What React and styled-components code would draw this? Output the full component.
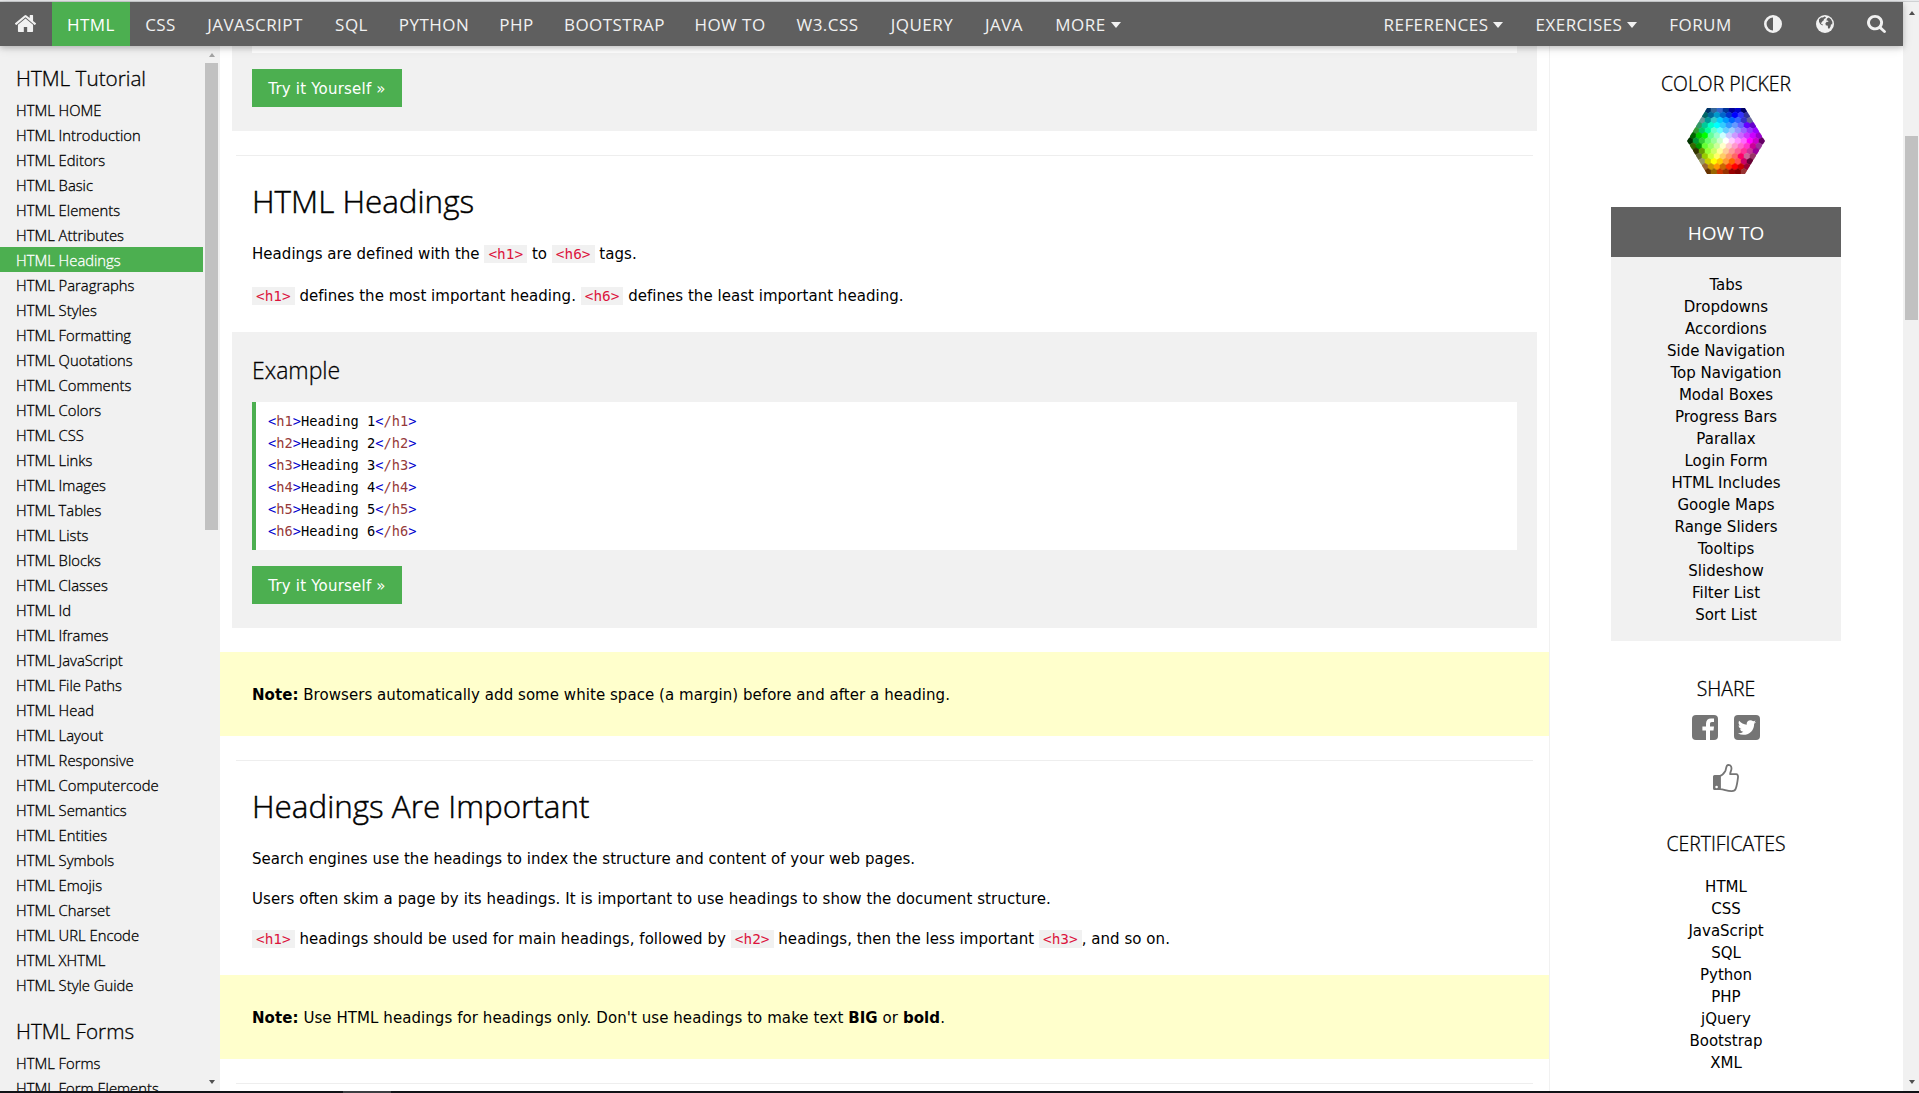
import React from "react";
import styled, { createGlobalStyle, css } from "styled-components";

const ui = `"Open Sans", "Noto Sans", sans-serif`;
const body = `"DejaVu Sans", Verdana, sans-serif`;
const mono = `"DejaVu Sans Mono", Consolas, monospace`;
const green = "#4caf50";
const light = "#f1f1f1";

// A weight between light and regular: the light cut with a hairline outline.
const semiLight = css`
  font-family: ${ui};
  font-weight: 300;
  -webkit-text-stroke: 0.3px currentColor;
`;

const Global = createGlobalStyle`
  * { box-sizing: border-box; }
  body { margin: 0; background: #fff; color: #000; overflow: hidden; font-family: ${body}; font-size: 15px; }
  h2, h3, p, ul { margin: 0; padding: 0; font-weight: 400; list-style: none; }
  a { color: inherit; text-decoration: none; }
  svg { display: block; }
`;

const Page = styled.div`
  display: flex;
  flex-direction: column;
  width: 1919px;
  height: 1093px;
  overflow: hidden;
`;
const TopEdge = styled.div`
  height: 2px;
  flex: none;
  background: #e9eaec;
  border-bottom: 1px solid #cfd1d3;
`;
const Window = styled.div`
  display: flex;
  height: 1089px;
  flex: none;
`;
const Site = styled.div`
  display: flex;
  flex-direction: column;
  width: 1903px;
`;
const BottomEdge = styled.div`
  display: flex;
  height: 2px;
  flex: none;
  padding-left: 343px;
  background: #101216;
`;
const BottomMark = styled.div`
  width: 48px;
  background: #3c3e42;
`;

const NavBar = styled.nav`
  position: relative;
  z-index: 2;
  display: flex;
  justify-content: space-between;
  height: 44px;
  flex: none;
  background: #5f5f5f;
  color: ${light};
  box-shadow: 0 2px 5px 0 rgba(0, 0, 0, 0.16), 0 2px 10px 0 rgba(0, 0, 0, 0.12);
`;
const NavGroup = styled.div`
  display: flex;
`;
const NavLink = styled.a`
  display: flex;
  align-items: center;
  justify-content: center;
  gap: 5px;
  width: ${(p) => p.$w}px;
  font-family: ${ui};
  font-size: 17px;
  letter-spacing: 0.45px;
  white-space: nowrap;
  ${(p) => p.$active && css`background: ${green}; color: #fff;`}
`;
const NavIcon = styled(NavLink)`
  padding-bottom: ${(p) => p.$lift || 0}px;
  padding-right: 1px;
`;
const Caret = styled.span`
  margin-top: 1px;
  border: 5.5px solid transparent;
  border-top: 6.5px solid ${light};
  border-bottom: 0;
`;

const Columns = styled.div`
  display: flex;
  height: 1045px;
  overflow: hidden;
`;
const Sidebar = styled.aside`
  display: flex;
  width: 220px;
  background: ${light};
`;
const Menu = styled.div`
  width: 203px;
  padding-top: 16px;
  overflow: hidden;
  white-space: nowrap;
`;
const MenuTitle = styled.h2`
  ${semiLight}
  height: 32px;
  margin: ${(p) => (p.$first ? 0 : 18)}px 0 3px;
  padding-left: 16px;
  font-size: 20.7px;
  line-height: 32px;
`;
const MenuItem = styled.a`
  ${semiLight}
  display: block;
  height: 25px;
  padding-left: 16px;
  font-size: 14.8px;
  line-height: 27px;
  ${(p) => p.$active && css`background: ${green}; color: #fff;`}
`;

const Track = styled.div`
  display: flex;
  flex-direction: column;
  align-items: center;
  width: ${(p) => p.$w}px;
  margin-left: ${(p) => p.$ml || 0}px;
  padding: ${(p) => p.$pad};
  background: ${light};
`;
const Arrow = styled.span`
  flex: none;
  border: 3.5px solid transparent;
  ${(p) =>
    p.$up
      ? css`border-top: 0; border-bottom: 4.5px solid ${p.$color};`
      : css`border-bottom: 0; border-top: 4.5px solid ${p.$color}; margin-top: auto;`}
`;
const Thumb = styled.div`
  flex: none;
  width: 13px;
  height: ${(p) => p.$h}px;
  margin-top: ${(p) => p.$mt}px;
  background: #c1c1c1;
`;

const Main = styled.main`
  display: flex;
  flex-direction: column;
  width: 1329px;
  flex: none;
`;
const Example = styled.section`
  display: flex;
  flex-direction: column;
  align-items: flex-start;
  margin: ${(p) => (p.$cut ? 0 : 24)}px 12px 0;
  padding: ${(p) => (p.$cut ? 0 : 20)}px 20px 24px;
  background: ${light};
`;
const ExampleTitle = styled.h3`
  ${semiLight}
  margin-bottom: 14px;
  font-size: 23px;
  line-height: 36px;
`;
const CodeBox = styled.div`
  align-self: stretch;
  padding: 8px 12px;
  border-left: 4px solid ${green};
  background: #fff;
  font-family: ${mono};
  font-size: 13.7px;
  line-height: 22px;
`;
const CodeTail = styled.div`
  align-self: stretch;
  height: 7px;
  background: #fff;
`;
const Mark = styled.span`
  color: mediumblue;
`;
const TagName = styled.span`
  color: #963a3a;
`;
const TryButton = styled.a`
  display: flex;
  align-items: center;
  justify-content: center;
  width: 150px;
  height: 38px;
  margin-top: 16px;
  padding-top: 2px;
  background: ${green};
  color: #fff;
  letter-spacing: 0.2px;
`;
const Rule = styled.div`
  height: 1px;
  flex: none;
  margin: 24px 16px 0;
  background: #eee;
`;
const Title = styled.h2`
  ${semiLight}
  -webkit-text-stroke-width: 0.45px;
  margin: 21px 0 1px 32px;
  font-size: 31.4px;
  line-height: 48px;
`;
const Para = styled.p`
  height: 23px;
  margin: ${(p) => p.$mt || 17}px 32px 0;
  line-height: 23px;
  letter-spacing: ${(p) => p.$ls || 0.04}px;
  white-space: nowrap;
`;
const Code = styled.code`
  display: inline-block;
  height: 18px;
  padding: 0 4px;
  background: ${light};
  color: crimson;
  font-family: ${mono};
  font-size: 14.4px;
  line-height: 18px;
  letter-spacing: 0;
`;
const Note = styled.div`
  height: 84px;
  flex: none;
  margin-top: 24px;
  padding: 32px 32px 29px;
  background: #ffffcc;
  line-height: 23px;
  letter-spacing: ${(p) => p.$ls || 0.05}px;
`;

const Right = styled.aside`
  display: flex;
  flex-direction: column;
  align-items: center;
  width: 354px;
  padding: 22px 1px 0 0;
  border-left: 1px solid ${light};
  text-align: center;
`;
const RightTitle = styled.h3`
  ${semiLight}
  height: 30px;
  margin-top: ${(p) => p.$mt || 0}px;
  font-size: 19.4px;
  line-height: 31px;
`;
const PickerBox = styled.div`
  margin: 10px 0 33px;
`;
const HowTo = styled.section`
  width: 230px;
  height: 434px;
  background: ${light};
`;
const HowToHead = styled.h3`
  height: 50px;
  margin-bottom: 17px;
  background: #616161;
  color: #fff;
  font-family: ${ui};
  font-size: 19px;
  line-height: 52px;
`;
const Links = styled.ul`
  line-height: 22px;
  margin-top: ${(p) => p.$mt || 0}px;
`;
const Share = styled.div`
  display: flex;
  gap: 16px;
  margin-top: ${(p) => p.$mt}px;
`;

const PALETTE = [
  "003366 336699 3366CC 003399 000099 0000CC 000066",
  "006666 006699 0099CC 0066CC 0033CC 0000FF 3333FF 333399",
  "669999 009999 33CCCC 00CCFF 0099FF 0066FF 3366FF 3333CC 666699",
  "339966 00CC99 00FFCC 00FFFF 33CCFF 3399FF 6699FF 6666FF 6600FF 6600CC",
  "339933 00CC66 00FF99 66FFCC 66FFFF 66CCFF 99CCFF 9999FF 9966FF 9933FF 9900FF",
  "006600 00CC00 00FF00 66FF99 99FFCC CCFFFF CCCCFF CC99FF CC66FF CC33FF CC00FF 9900CC",
  "003300 009933 33CC33 66FF66 99FF99 CCFFCC FFFFFF FFCCFF FF99FF FF66FF FF00FF CC00CC 660066",
  "336600 009900 66FF33 99FF66 CCFF99 FFFFCC FFCCCC FF99CC FF66CC FF33CC CC0099 993399",
  "333300 669900 99FF33 CCFF66 FFFF99 FFCC99 FF9999 FF6699 FF3399 CC3399 990099",
  "666633 99CC00 CCFF33 FFFF66 FFCC66 FF9966 FF6666 FF0066 CC6699 993366",
  "999966 CCCC00 FFFF00 FFCC00 FF9933 FF6600 FF5050 CC0066 660033",
  "996633 CC9900 FF9900 CC6600 FF3300 FF0000 CC0000 990033",
  "663300 996600 CC3300 993300 990000 800000 993333",
].map((row) => row.split(" "));

function ColorPicker() {
  return (
    <svg width="78" height="66" viewBox="0 0 78 66">
      <defs>
        <clipPath id="hex">
          <polygon points="20,0 58,0 78,33 58,66 20,66 0,33" />
        </clipPath>
      </defs>
      <g clipPath="url(#hex)">
        {PALETTE.map((row, r) =>
          row.map((c, i) => {
            const x = 39 + (i - (row.length - 1) / 2) * 6;
            const y = 33 + (r - 6) * 5.15;
            return (
              <polygon
                key={r + "-" + i}
                fill={"#" + c}
                stroke={"#" + c}
                strokeWidth="0.5"
                points={`${x},${y - 3.5} ${x + 3},${y - 1.75} ${x + 3},${y + 1.75} ${x},${y + 3.5} ${x - 3},${y + 1.75} ${x - 3},${y - 1.75}`}
              />
            );
          })
        )}
      </g>
    </svg>
  );
}

const HomeIcon = () => (
  <svg width="21" height="17" viewBox="97 250 1598 1290" fill={light}>
    <path d="M1472 992v480q0 26-19 45t-45 19h-384v-384h-256v384h-384q-26 0-45-19t-19-45v-480q0-1 .5-3t.5-3l575-474 575 474q1 2 1 6zm223-69l-62 74q-8 9-21 11h-3q-13 0-21-7l-692-577-692 577q-12 8-24 7-13-2-21-11l-62-74q-8-10-7-23.5t11-21.5l719-599q32-26 76-26t76 26l244 204v-195q0-14 9-23t23-9h192q14 0 23 9t9 23v408l219 182q10 8 11 21.5t-7 23.5z" />
  </svg>
);
const ContrastIcon = () => (
  <svg width="18" height="18" viewBox="0 0 18 18" fill={light}>
    <path fillRule="evenodd" d="M9 0a9 9 0 1 1 0 18A9 9 0 0 1 9 0zM9 2.6a6.4 6.4 0 0 0 0 12.8z" />
  </svg>
);
const GlobeIcon = () => (
  <svg width="18" height="18" viewBox="0 0 18 18">
    <circle cx="9" cy="9" r="9" fill={light} />
    <path
      fill="#5f5f5f"
      d="M3 4.2 5.2 2.6 7 2.4 8.6 1.6 10 2.2 9.2 3.4 7.6 4 8.2 5 6.6 6 5.8 7.6 4.6 7.8 5.8 9.2 7 9.6 6.4 10.4 4.2 9 3 6.8zM11 3.4 12.8 2.6 15 4.2 16.4 7 16.2 9.4 15 9.2 14.6 11.6 13.2 13.8 12 13.2 11.8 10.8 9.8 10.2 9.4 8.2 10.8 6.8 12.6 7 11.6 5.6 10.4 5.6z"
    />
  </svg>
);
const SearchIcon = () => (
  <svg width="19" height="18" viewBox="64 128 1664 1664" fill={light} preserveAspectRatio="none">
    <path d="M1216 832q0-185-131.5-316.5t-316.5-131.5-316.5 131.5-131.5 316.5 131.5 316.5 316.5 131.5 316.5-131.5 131.5-316.5zm512 832q0 52-38 90t-90 38q-54 0-90-38l-343-342q-179 124-399 124-143 0-273.5-55.5t-225-150-150-225-55.5-273.5 55.5-273.5 150-225 225-150 273.5-55.5 273.5 55.5 225 150 150 225 55.5 273.5q0 220-124 399l343 343q37 37 37 90z" />
  </svg>
);
const FacebookIcon = () => (
  <svg width="26" height="25" viewBox="0 0 26 25">
    <rect width="26" height="25" rx="4" fill="#757575" />
    <path fill="#fff" d="M14 25v-9.5h-3.6v-4H14V8.6C14 5.2 16 3.4 19 3.4c1.3 0 2.4.1 3 .2v3.5h-2c-1.5 0-2 .8-2 1.9v2.5h4l-.5 4H18V25z" />
  </svg>
);
const TwitterIcon = () => (
  <svg width="26" height="25" viewBox="0 0 26 25">
    <rect width="26" height="25" rx="4" fill="#757575" />
    <path
      fill="#fff"
      transform="translate(2.6 2.2) scale(0.0115)"
      d="M1684 408q-67 98-162 167 1 14 1 42 0 130-38 259.5t-115.5 248.5-184.5 210.5-258 146-323 54.5q-271 0-496-145 35 4 78 4 225 0 401-138-105-2-188-64.5t-114-159.5q33 5 61 5 43 0 85-11-112-23-185.5-111.5t-73.5-205.5v-4q68 38 146 41-66-44-105-115t-39-154q0-88 44-163 121 149 294.5 238.5t371.5 99.5q-8-38-8-74 0-134 94.5-228.5t228.5-94.5q140 0 236 102 109-21 205-78-37 115-142 178 93-10 186-50z"
    />
  </svg>
);
const ThumbIcon = () => (
  <svg width="26" height="28" viewBox="0 0 26 28">
    <path fill="#757575" fillRule="evenodd" d="M1.5 11H7v15H1.5A1.5 1.5 0 0 1 0 24.5v-12A1.5 1.5 0 0 1 1.5 11zM3.6 21.7a1.3 1.3 0 1 0 0 2.6 1.3 1.3 0 0 0 0-2.6z" />
    <path
      fill="none"
      stroke="#757575"
      strokeWidth="1.8"
      strokeLinejoin="round"
      d="M7 11.9c2.5-.4 4-2.7 5.2-4.6C13.5 5 12.6 1 15.4.9c2.7 0 3.3 2.4 3 4.4-.3 1.8-1.2 3-1.3 4.9h6c1.5 0 2.1 1.5 1.9 3-.5 4.2-.9 7.6-2.2 11.3-.6 2-2 2.6-4 2.6-4.5.1-7.3-1.6-11.8-2z"
    />
  </svg>
);

const NAV = [["HTML", 78], ["CSS", 61], ["JAVASCRIPT", 128], ["SQL", 65], ["PYTHON", 100], ["PHP", 65], ["BOOTSTRAP", 131], ["HOW TO", 100], ["W3.CSS", 95], ["JQUERY", 94], ["JAVA", 70], ["MORE", 98, true]];
const MENU = ["HOME", "Introduction", "Editors", "Basic", "Elements", "Attributes", "Headings", "Paragraphs", "Styles", "Formatting", "Quotations", "Comments", "Colors", "CSS", "Links", "Images", "Tables", "Lists", "Blocks", "Classes", "Id", "Iframes", "JavaScript", "File Paths", "Head", "Layout", "Responsive", "Computercode", "Semantics", "Entities", "Symbols", "Emojis", "Charset", "URL Encode", "XHTML", "Style Guide"];
const HOWTO = ["Tabs", "Dropdowns", "Accordions", "Side Navigation", "Top Navigation", "Modal Boxes", "Progress Bars", "Parallax", "Login Form", "HTML Includes", "Google Maps", "Range Sliders", "Tooltips", "Slideshow", "Filter List", "Sort List"];
const CERTS = ["HTML", "CSS", "JavaScript", "SQL", "Python", "PHP", "jQuery", "Bootstrap", "XML"];

const LinkList = ({ items, mt }) => (
  <Links $mt={mt}>
    {items.map((t) => (
      <li key={t}><a>{t}</a></li>
    ))}
  </Links>
);

export default function App() {
  return (
    <Page>
      <Global />
      <TopEdge />
      <Window>
        <Site>
          <NavBar>
            <NavGroup>
              <NavIcon $w={52} $lift={1}><HomeIcon /></NavIcon>
              {NAV.map(([t, w, caret]) => (
                <NavLink key={t} $w={w} $active={t === "HTML"}>{t}{caret && <Caret />}</NavLink>
              ))}
            </NavGroup>
            <NavGroup>
              <NavLink $w={151}>REFERENCES<Caret /></NavLink>
              <NavLink $w={135}>EXERCISES<Caret /></NavLink>
              <NavLink $w={93}>FORUM</NavLink>
              <NavIcon $w={52} $lift={1}><ContrastIcon /></NavIcon>
              <NavIcon $w={52} $lift={1}><GlobeIcon /></NavIcon>
              <NavIcon $w={52} $lift={0}><SearchIcon /></NavIcon>
            </NavGroup>
          </NavBar>
          <Columns>
            <Sidebar>
              <Menu>
                <MenuTitle $first>HTML Tutorial</MenuTitle>
                {MENU.map((t) => (
                  <MenuItem key={t} $active={t === "Headings"}>HTML {t}</MenuItem>
                ))}
                <MenuTitle>HTML Forms</MenuTitle>
                <MenuItem>HTML Forms</MenuItem>
                <MenuItem>HTML Form Elements</MenuItem>
              </Menu>
              <Track $w={13} $ml={2} $pad="7px 0 7px">
                <Arrow $up $color="#a3a3a3" />
                <Thumb $h={467} $mt={5.5} />
                <Arrow $color="#505050" />
              </Track>
            </Sidebar>
            <Main>
              <Example $cut>
                <CodeTail />
                <TryButton>Try it Yourself »</TryButton>
              </Example>
              <Rule />
              <Title>HTML Headings</Title>
              <Para>Headings are defined with the <Code>&lt;h1&gt;</Code> to <Code>&lt;h6&gt;</Code> tags.</Para>
              <Para $mt={19} $ls={0.03}><Code>&lt;h1&gt;</Code> defines the most important heading. <Code>&lt;h6&gt;</Code> defines the least important heading.</Para>
              <Example>
                <ExampleTitle>Example</ExampleTitle>
                <CodeBox>
                  {[1, 2, 3, 4, 5, 6].map((n) => (
                    <div key={n}>
                      <Mark>&lt;</Mark><TagName>h{n}</TagName><Mark>&gt;</Mark>Heading {n}<Mark>&lt;</Mark><TagName>/h{n}</TagName><Mark>&gt;</Mark>
                    </div>
                  ))}
                </CodeBox>
                <TryButton>Try it Yourself »</TryButton>
              </Example>
              <Note><b>Note:</b> Browsers automatically add some white space (a margin) before and after a heading.</Note>
              <Rule />
              <Title>Headings Are Important</Title>
              <Para $ls={0.03}>Search engines use the headings to index the structure and content of your web pages.</Para>
              <Para $ls={0.07}>Users often skim a page by its headings. It is important to use headings to show the document structure.</Para>
              <Para $ls={0.05}><Code>&lt;h1&gt;</Code> headings should be used for main headings, followed by <Code>&lt;h2&gt;</Code> headings, then the less important <Code>&lt;h3&gt;</Code>, and so on.</Para>
              <Note $ls={0.07}><b>Note:</b> Use HTML headings for headings only. Don't use headings to make text <b>BIG</b> or <b>bold</b>.</Note>
              <Rule />
            </Main>
            <Right>
              <RightTitle>COLOR PICKER</RightTitle>
              <PickerBox><ColorPicker /></PickerBox>
              <HowTo>
                <HowToHead>HOW TO</HowToHead>
                <LinkList items={HOWTO} />
              </HowTo>
              <RightTitle $mt={32}>SHARE</RightTitle>
              <Share $mt={12}><FacebookIcon /><TwitterIcon /></Share>
              <Share $mt={24}><ThumbIcon /></Share>
              <RightTitle $mt={36}>CERTIFICATES</RightTitle>
              <LinkList items={CERTS} mt={18} />
            </Right>
          </Columns>
        </Site>
        <Track $w={16} $pad="9px 0 7px 1px">
          <Arrow $up $color="#505050" />
          <Thumb $h={184} $mt={120.5} />
          <Arrow $color="#505050" />
        </Track>
      </Window>
      <BottomEdge><BottomMark /></BottomEdge>
    </Page>
  );
}
